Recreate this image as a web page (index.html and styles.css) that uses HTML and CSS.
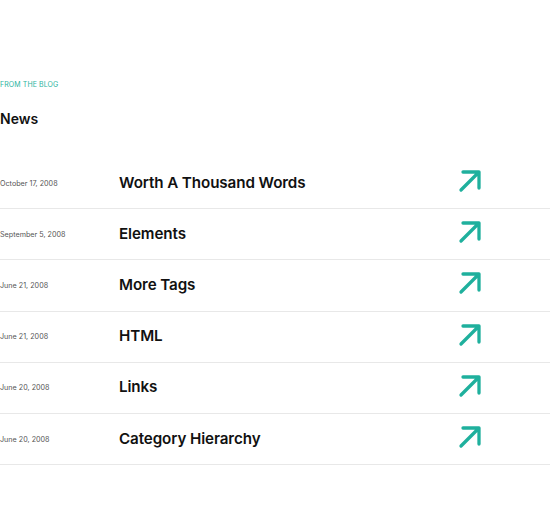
FILE: index.html
```html
<!DOCTYPE html>
<html lang="en">
<head>
<meta charset="UTF-8">
<title>News</title>
<link rel="stylesheet" href="styles.css">
</head>
<body>

<section class="blog">
  <p class="eyebrow">FROM THE BLOG</p>
  <h2 class="heading">News</h2>

  <ul class="posts">
    <li class="post">
      <span class="post-date">October 17, 2008</span>
      <a class="post-title" href="#">Worth A Thousand Words</a>
      <svg class="post-arrow" viewBox="0 0 24 24"><path d="M3 21 L21 3 M5 3 H21 V19"/></svg>
    </li>
    <li class="post">
      <span class="post-date">September 5, 2008</span>
      <a class="post-title" href="#">Elements</a>
      <svg class="post-arrow" viewBox="0 0 24 24"><path d="M3 21 L21 3 M5 3 H21 V19"/></svg>
    </li>
    <li class="post">
      <span class="post-date">June 21, 2008</span>
      <a class="post-title" href="#">More Tags</a>
      <svg class="post-arrow" viewBox="0 0 24 24"><path d="M3 21 L21 3 M5 3 H21 V19"/></svg>
    </li>
    <li class="post">
      <span class="post-date">June 21, 2008</span>
      <a class="post-title" href="#">HTML</a>
      <svg class="post-arrow" viewBox="0 0 24 24"><path d="M3 21 L21 3 M5 3 H21 V19"/></svg>
    </li>
    <li class="post">
      <span class="post-date">June 20, 2008</span>
      <a class="post-title" href="#">Links</a>
      <svg class="post-arrow" viewBox="0 0 24 24"><path d="M3 21 L21 3 M5 3 H21 V19"/></svg>
    </li>
    <li class="post">
      <span class="post-date">June 20, 2008</span>
      <a class="post-title" href="#">Category Hierarchy</a>
      <svg class="post-arrow" viewBox="0 0 24 24"><path d="M3 21 L21 3 M5 3 H21 V19"/></svg>
    </li>
  </ul>
</section>

</body>
</html>
```

FILE: styles.css
```css
body {
  margin: 0;
  background-color: #FFFFFF;
  color: #111111;
  font-family: Inter, "Noto Sans", sans-serif;
}

.blog {
  padding-top: 80px;
}

.eyebrow {
  margin: 0;
  font-size: 7px;
  line-height: 10px;
  color: #2AB3A0; /* teal accent */
  letter-spacing: 0.1px;
}

.heading {
  margin: 20px 0 0;
  font-size: 14px;
  line-height: 18px;
  font-weight: 600;
}

.posts {
  list-style: none;
  margin: 30px 0 0;
  padding: 0;
}

.post {
  display: grid;
  grid-template-columns: 119px 339px 24px;
  align-items: center;
  height: 50.2px;
  border-bottom: 1px solid #E8E8E8;
}

.post-date {
  font-size: 7.2px;
  color: #555555;
}

.post-title {
  margin-bottom: 2px;
  font-size: 15.2px;
  font-weight: 600;
  color: #111111;
  text-decoration: none;
  letter-spacing: -0.1px;
}

.post-arrow {
  width: 24px;
  height: 24px;
  margin-bottom: 4px;
  fill: none;
  stroke: #1FB09D;
  stroke-width: 3.3;
  stroke-linecap: round;
  stroke-linejoin: round;
}
```
